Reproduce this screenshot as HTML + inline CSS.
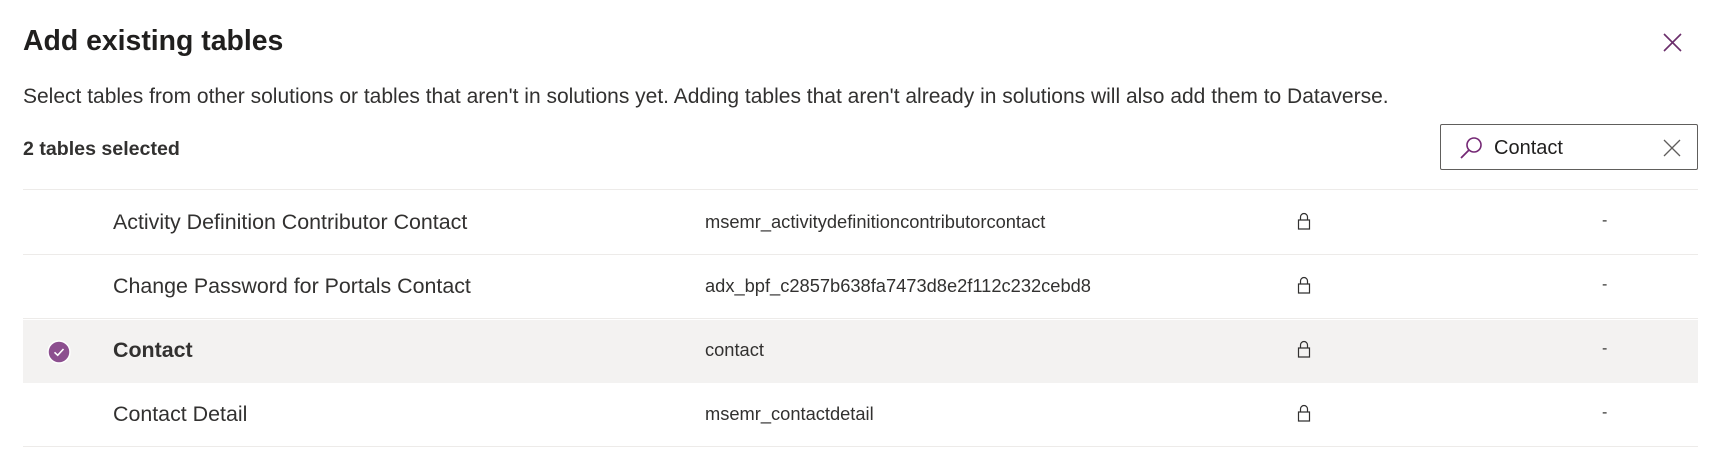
<!DOCTYPE html>
<html><head><meta charset="utf-8"><style>
*{margin:0;padding:0;box-sizing:border-box}
body{width:1715px;height:451px;background:#fff;font-family:"Liberation Sans",sans-serif;color:#323130;position:relative;overflow:hidden}
.a{position:absolute;white-space:nowrap}
.title{left:23px;top:25px;font-size:28.4px;font-weight:bold;color:#201f1e}
.desc{left:23px;top:85px;font-size:21px}
.sel{left:23px;top:138px;font-size:19.6px;font-weight:bold}
.search{left:1440px;top:124px;width:258px;height:46px;border:1px solid #605e5c;border-radius:2px}
.line{left:23px;width:1675px;height:1px;background:#edebe9}
.row{left:23px;width:1675px;height:63px}
.name{left:113px;font-size:21.4px}
.lg{left:705px;font-size:18.3px}
.dash{left:1602px;font-size:16px}
</style></head><body>
<div class="a title">Add existing tables</div>
<svg class="a" style="left:1663px;top:33px" width="19" height="19" viewBox="0 0 19 19"><path d="M1 1L18 18M18 1L1 18" stroke="#6b2e6b" stroke-width="1.6"/></svg>
<div class="a desc">Select tables from other solutions or tables that aren't in solutions yet. Adding tables that aren't already in solutions will also add them to Dataverse.</div>
<div class="a sel">2 tables selected</div>
<div class="a search">
<svg class="a" style="left:18px;top:11px" width="24" height="24" viewBox="0 0 24 24"><circle cx="15" cy="9" r="7" fill="none" stroke="#742774" stroke-width="1.6"/><path d="M10 14L2 22" stroke="#742774" stroke-width="1.8"/></svg>
<div class="a" style="left:53px;top:12px;font-size:20px;color:#201f1e">Contact</div>
<svg class="a" style="left:222px;top:14px" width="18" height="18" viewBox="0 0 18 18"><path d="M1 1L17 17M17 1L1 17" stroke="#605e5c" stroke-width="1.3"/></svg>
</div>
<div class="a line" style="top:189px"></div>
<div class="a row" style="top:320px;background:#f3f2f1"></div>
<div class="a line" style="top:254px"></div>
<div class="a line" style="top:318px"></div>
<div class="a line" style="top:446px"></div>

<div class="a name" style="top:210px">Activity Definition Contributor Contact</div>
<div class="a lg" style="top:211px">msemr_activitydefinitioncontributorcontact</div>
<div class="a name" style="top:274px">Change Password for Portals Contact</div>
<div class="a lg" style="top:275px">adx_bpf_c2857b638fa7473d8e2f112c232cebd8</div>
<div class="a name" style="top:338px;font-weight:bold">Contact</div>
<div class="a lg" style="top:339px">contact</div>
<div class="a name" style="top:402px">Contact Detail</div>
<div class="a lg" style="top:403px">msemr_contactdetail</div>

<svg class="a" style="left:47px;top:340px" width="24" height="24" viewBox="0 0 24 24"><circle cx="12" cy="12" r="11" fill="#8c4f8f" stroke="#fff" stroke-width="1.5"/><path d="M7.5 12.3L10.7 15.3L16.5 9" fill="none" stroke="#fff" stroke-width="1.6"/></svg>

<svg class="a" style="left:1297px;top:212px" width="14" height="18" viewBox="0 0 14 18"><path d="M3.5 8V5a3.5 3.5 0 0 1 7 0v3M1.5 8h11v9h-11z" fill="none" stroke="#323130" stroke-width="1.2"/></svg>
<svg class="a" style="left:1297px;top:276px" width="14" height="18" viewBox="0 0 14 18"><path d="M3.5 8V5a3.5 3.5 0 0 1 7 0v3M1.5 8h11v9h-11z" fill="none" stroke="#323130" stroke-width="1.2"/></svg>
<svg class="a" style="left:1297px;top:340px" width="14" height="18" viewBox="0 0 14 18"><path d="M3.5 8V5a3.5 3.5 0 0 1 7 0v3M1.5 8h11v9h-11z" fill="none" stroke="#323130" stroke-width="1.2"/></svg>
<svg class="a" style="left:1297px;top:404px" width="14" height="18" viewBox="0 0 14 18"><path d="M3.5 8V5a3.5 3.5 0 0 1 7 0v3M1.5 8h11v9h-11z" fill="none" stroke="#323130" stroke-width="1.2"/></svg>

<div class="a dash" style="top:212px">-</div>
<div class="a dash" style="top:276px">-</div>
<div class="a dash" style="top:340px">-</div>
<div class="a dash" style="top:404px">-</div>
</body></html>
